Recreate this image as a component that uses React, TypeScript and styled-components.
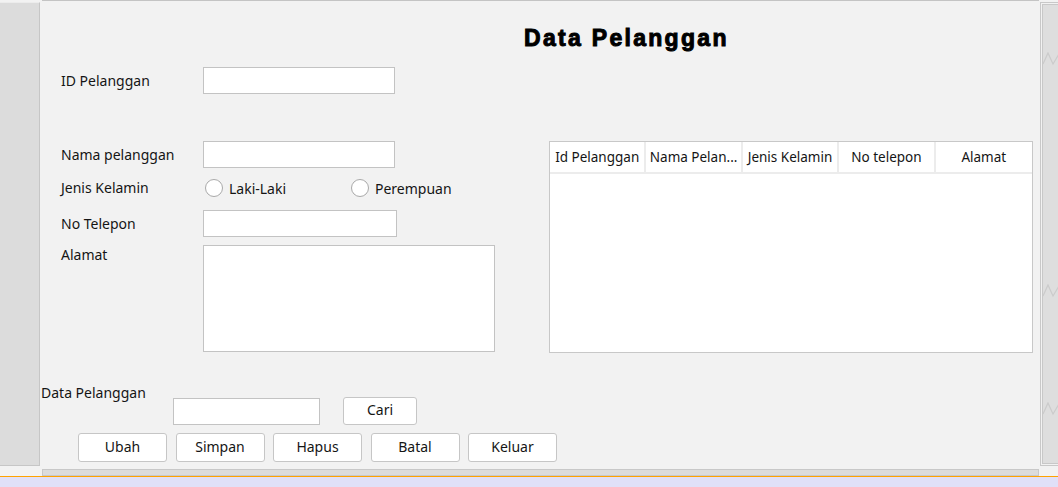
import React from 'react';
import styled, { createGlobalStyle } from 'styled-components';

const Global = createGlobalStyle`
  html, body { margin: 0; padding: 0; background: #f2f2f2; }
  body { font-family: "Noto Sans", "Open Sans", sans-serif; font-size: 14px; color: #151515; }
  * { box-sizing: border-box; }
`;

const Page = styled.div`
  width: 1058px;
  height: 487px;
  display: flex;
  flex-direction: column;
  background: #f2f2f2;
  overflow: hidden;
`;

const Workspace = styled.div`
  display: flex;
  height: 467px;
`;

const SidePanel = styled.div`
  width: 40px;
  margin-top: 2px;
  height: 464px;
  background: #dcdcdc;
  border-top: 1px solid #ececec;
  border-right: 1px solid #c6c6c6;
  border-bottom: 1px solid #c6c6c6;
`;

const Main = styled.div`
  width: 997px;
  margin-left: 2px;
  border-top: 1px solid #c4c4c4;
  display: flex;
  flex-direction: column;
`;

const RightStrip = styled.div`
  margin-left: 1px;
  margin-top: 2px;
  width: 18px;
  height: 464px;
  border: 1px solid #c8c8c8;
  border-right: none;
  padding: 1px 0 1px 1px;
`;

const StripInner = styled.div`
  height: 100%;
  background: #dedede;
  border: 1px solid #c8c8c8;
  border-right: none;
  display: flex;
  flex-direction: column;
  padding-top: 47px;
`;

const Zigzag = styled.svg<{ $top: number }>`
  display: block;
  margin-top: ${(p) => p.$top}px;
  flex: none;
`;

const TitleRow = styled.div`
  padding-left: 482px;
  margin-top: 25px;
  height: 24px;
`;

const Title = styled.h1`
  margin: 0;
  font-family: "Liberation Sans", Arial, sans-serif;
  font-weight: 700;
  font-size: 23px;
  line-height: 24px;
  letter-spacing: 2.3px;
  color: #000;
  -webkit-text-stroke: 1px #000;
  white-space: nowrap;
`;

const FieldRow = styled.div<{ $top: number; $align?: string }>`
  display: grid;
  grid-template-columns: 142px auto;
  align-items: ${(p) => p.$align || 'center'};
  margin-top: ${(p) => p.$top}px;
`;

const IdSection = styled.div`
  padding-left: 19px;
  margin-top: 17px;
`;

const Label = styled.span`
  line-height: 20px;
  white-space: nowrap;
`;

const TextInput = styled.div<{ $w: number; $h?: number }>`
  width: ${(p) => p.$w}px;
  height: ${(p) => p.$h || 27}px;
  background: #fff;
  border: 1px solid #c3c3c3;
`;

const Middle = styled.div`
  display: flex;
  padding-left: 19px;
  margin-top: 47px;
`;

const FormColumn = styled.div`
  width: 488px;
  display: flex;
  flex-direction: column;
`;

const RadioGroup = styled.div`
  display: grid;
  grid-template-columns: 146px auto;
  padding-left: 2px;
  height: 20px;
  align-items: center;
`;

const RadioItem = styled.label`
  display: flex;
  align-items: center;
  gap: 6px;
  white-space: nowrap;
`;

const RadioCircle = styled.span`
  width: 18px;
  height: 18px;
  border-radius: 50%;
  border: 1px solid #a9a9a9;
  background: #fff;
  flex: none;
`;

const Table = styled.div`
  width: 484px;
  height: 212px;
  background: #fff;
  border: 1px solid #c8c8c8;
`;

const HeaderRow = styled.div`
  display: grid;
  grid-template-columns: repeat(5, 1fr);
  height: 32px;
  border-bottom: 2px solid #ececec;
`;

const HeaderCell = styled.div<{ $last?: boolean }>`
  line-height: 30px;
  font-size: 13.5px;
  text-align: center;
  padding: 0 1px;
  white-space: nowrap;
  overflow: hidden;
  border-right: ${(p) => (p.$last ? 'none' : '2px solid #ececec')};
`;

const SearchRow = styled.div`
  display: flex;
  align-items: flex-end;
  height: 41px;
  margin-top: 31px;
  margin-left: -1px;
`;

const SearchLabel = styled.span`
  width: 132px;
  align-self: flex-start;
  line-height: 18px;
  white-space: nowrap;
`;

const Button = styled.button<{ $w?: number; $h?: number }>`
  width: ${(p) => p.$w || 89}px;
  height: ${(p) => p.$h || 29}px;
  background: #fff;
  border: 1px solid #c6c6c6;
  border-radius: 3px;
  font-family: inherit;
  font-size: 14px;
  line-height: 18px;
  color: #151515;
  padding: 0 0 2px;
  flex: none;
`;

const CariButton = styled(Button)`
  margin-left: 23px;
`;

const ButtonRow = styled.div`
  display: flex;
  gap: 8.5px;
  padding-left: 36px;
  margin-top: 8px;
`;

const BottomBar = styled.div`
  margin-top: 2px;
  margin-left: 42px;
  width: 997px;
  height: 7px;
  background: #dcdcdc;
  border: 1px solid #c8c8c8;
`;

const OrangeLine = styled.div`
  height: 1px;
  background: #ffa200;
`;

const Lavender = styled.div`
  flex: 1;
  background: #e0e0f8;
`;

const ZigMark = ({ top }: { top: number }) => (
  <Zigzag $top={top} width="16" height="14" viewBox="0 0 16 14">
    <polyline points="0,12 5,1 10,12 16,2" fill="none" stroke="#cbcbcb" strokeWidth="1.2" />
  </Zigzag>
);

export default function App() {
  return (
    <Page>
      <Global />
      <Workspace>
        <SidePanel />
        <Main>
          <TitleRow>
            <Title>Data Pelanggan</Title>
          </TitleRow>
          <IdSection>
            <FieldRow $top={0}>
              <Label>ID Pelanggan</Label>
              <TextInput $w={192} />
            </FieldRow>
          </IdSection>
          <Middle>
            <FormColumn>
              <FieldRow $top={0}>
                <Label>Nama pelanggan</Label>
                <TextInput $w={192} />
              </FieldRow>
              <FieldRow $top={10}>
                <Label>Jenis Kelamin</Label>
                <RadioGroup>
                  <RadioItem>
                    <RadioCircle />
                    Laki-Laki
                  </RadioItem>
                  <RadioItem>
                    <RadioCircle />
                    Perempuan
                  </RadioItem>
                </RadioGroup>
              </FieldRow>
              <FieldRow $top={12}>
                <Label>No Telepon</Label>
                <TextInput $w={194} />
              </FieldRow>
              <FieldRow $top={8} $align="start">
                <Label>Alamat</Label>
                <TextInput $w={292} $h={107} />
              </FieldRow>
            </FormColumn>
            <Table>
              <HeaderRow>
                <HeaderCell>Id Pelanggan</HeaderCell>
                <HeaderCell>Nama Pelan...</HeaderCell>
                <HeaderCell>Jenis Kelamin</HeaderCell>
                <HeaderCell>No telepon</HeaderCell>
                <HeaderCell $last>Alamat</HeaderCell>
              </HeaderRow>
            </Table>
          </Middle>
          <SearchRow>
            <SearchLabel>Data Pelanggan</SearchLabel>
            <TextInput $w={147} />
            <CariButton $w={74} $h={28}>Cari</CariButton>
          </SearchRow>
          <ButtonRow>
            <Button>Ubah</Button>
            <Button>Simpan</Button>
            <Button>Hapus</Button>
            <Button>Batal</Button>
            <Button>Keluar</Button>
          </ButtonRow>
        </Main>
        <RightStrip>
          <StripInner>
            <ZigMark top={0} />
            <ZigMark top={218} />
            <ZigMark top={104} />
          </StripInner>
        </RightStrip>
      </Workspace>
      <BottomBar />
      <OrangeLine />
      <Lavender />
    </Page>
  );
}
